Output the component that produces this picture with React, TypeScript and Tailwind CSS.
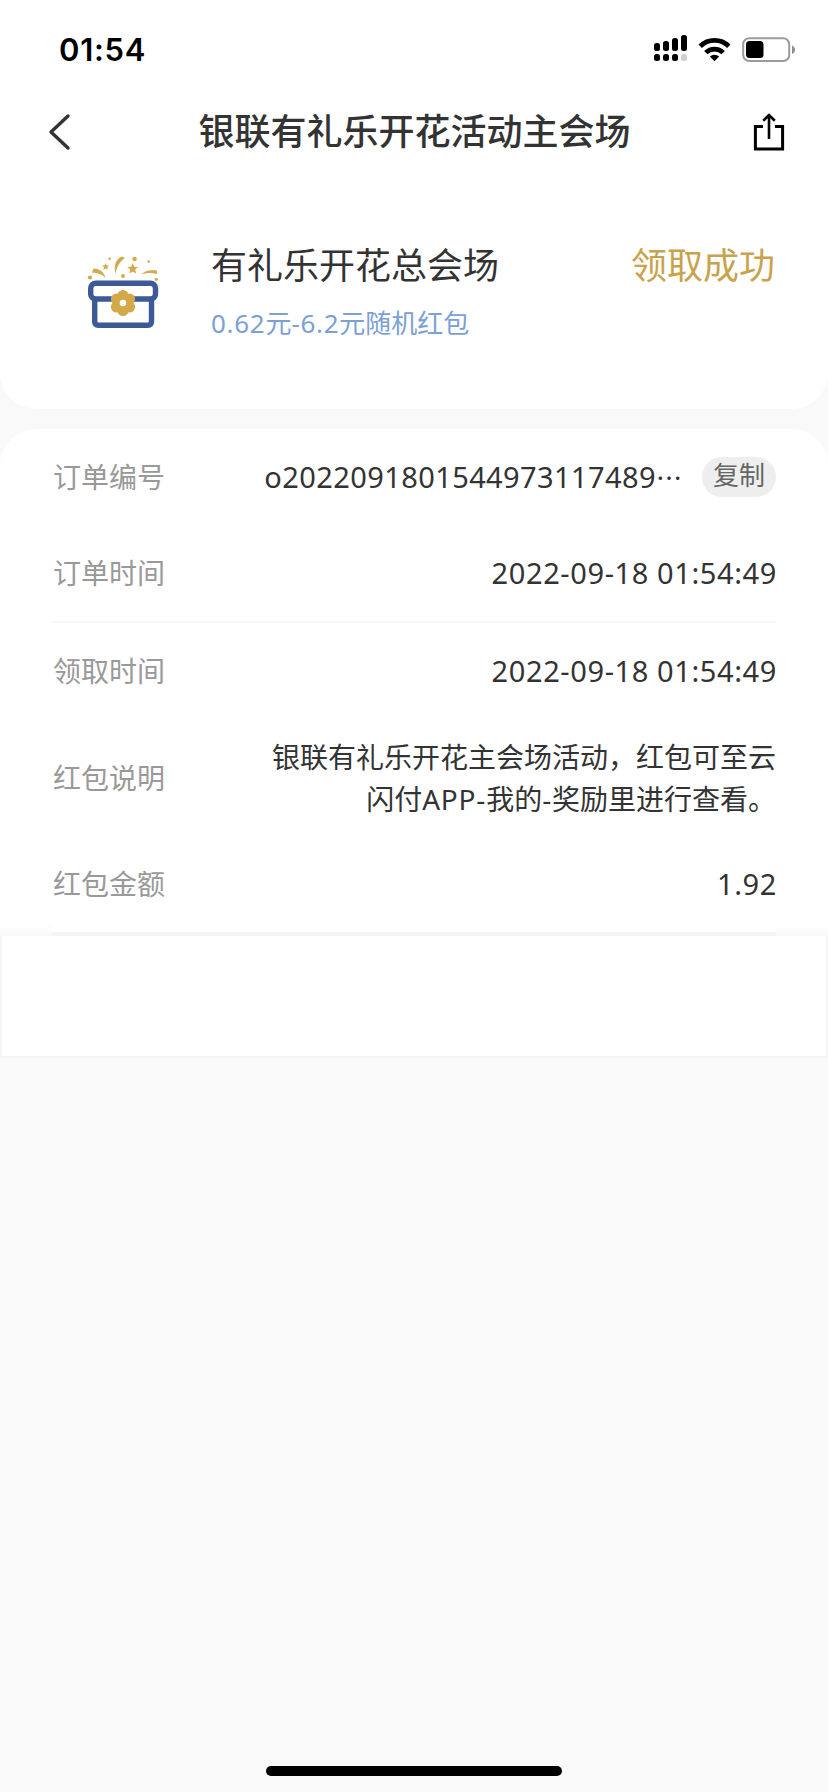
const StatusBar = () => {
  return (
    <div className="flex h-[98px] justify-between pl-[59px] pr-[33px]">
      <div className="mt-[28px] h-[44px] font-['Inter'] text-[31px] leading-[44px] font-semibold tracking-[0.7px] text-black">
        01:54
      </div>
      <svg className="mt-[30px] h-[40px] w-[146px]" viewBox="648 30 146 40">
        <g fill="#000">
          <rect x="653" y="43" width="6" height="8" rx="2.5" />
          <rect x="662" y="41" width="6" height="10" rx="2.5" />
          <rect x="671" y="38" width="6" height="13" rx="2.5" />
          <rect x="680" y="35" width="6" height="16" rx="2.5" />
          <rect x="653" y="54" width="6" height="7" rx="2.5" />
          <rect x="662" y="54" width="6" height="7" rx="2.5" />
          <rect x="671" y="54" width="6" height="7" rx="2.5" />
          <rect x="680" y="54" width="6" height="7" rx="2.5" fill="#d0d0d0" />
        </g>
        <g fill="none" stroke="#000" strokeWidth="4.8">
          <path d="M699.2 46.2a20.5 20.5 0 0 1 28.6 0" />
          <path d="M704.8 52.6a12.4 12.4 0 0 1 17.4 0" />
        </g>
        <path d="M713.5 61.200l-4.600-4.600a6.600 6.600 0 0 1 9.200 0z" fill="#000" />
        <rect x="742.2" y="38.2" width="46" height="22.8" rx="6" fill="none" stroke="#9b9b9b" strokeWidth="2" />
        <rect x="745" y="41" width="17.5" height="17" rx="3.5" fill="#000" />
        <path d="M791 45.500c4 1.600 4 6.800 0 8.400z" fill="#8e8e8e" />
      </svg>
    </div>
  );
};

const NavBar = () => {
  return (
    <div className="flex h-[68px] items-center justify-between pl-[47px] pr-[43px]">
      <svg className="h-[40px] w-[24px]" viewBox="0 0 24 40" fill="none" stroke="#333" strokeWidth="3.4" strokeLinecap="round" strokeLinejoin="round">
        <path d="M21 4L4 20l17 16" />
      </svg>
      <h1 className="ml-[5px] text-[36px] leading-[48px] font-medium">
        银联有礼乐开花活动主会场
      </h1>
      <svg className="h-[40px] w-[32px]" viewBox="0 0 32 40" fill="none" stroke="#000" strokeWidth="3">
        <path d="M10 14.500H2.400v22.500h27.200v-22.500H22" />
        <path d="M16 27V3M10.200 8.700L16 3l5.800 5.700" strokeWidth="2.600" />
      </svg>
    </div>
  );
};

const GiftIcon = () => {
  return (
    <svg className="h-[80px] w-[80px]" viewBox="84 250 80 80">
      <g fill="none" stroke="#3d5a96" strokeWidth="5.400">
        <rect x="90.700" y="283.200" width="64.800" height="15.800" rx="5" />
        <path d="M94.700 299v22.500q0 3.800 3.800 3.800h49.200q3.800 0 3.800-3.800V299" />
      </g>
      <g fill="#d3a94a">
        <circle cx="123" cy="295.500" r="5.600" />
        <circle cx="129.500" cy="299" r="5.600" />
        <circle cx="129.500" cy="307" r="5.600" />
        <circle cx="123" cy="310.500" r="5.600" />
        <circle cx="116.500" cy="307" r="5.600" />
        <circle cx="116.500" cy="299" r="5.600" />
        <circle cx="123" cy="303" r="7" />
        <circle cx="90" cy="277.500" r="2.100" />
        <circle cx="109.600" cy="258.800" r="1.300" />
        <circle cx="123" cy="276" r="1.900" />
        <circle cx="134.600" cy="259" r="2.300" />
        <circle cx="148.700" cy="261.500" r="1.300" />
        <circle cx="156.300" cy="279.300" r="1.600" />
        <path d="M93.500 268.500c6 0 10.500 3.500 12 9.500-3.500-4-7.500-5-13.500-5.500z" />
        <path d="M125 258c-5 3.500-8 8-9.500 16-2-9 .5-15 6.500-17.500z" />
        <path d="M140.500 274.500c4.500-4 10-5 16.500-4v3.400c-6-1.400-11-1.200-16.500.6z" />
        <path d="M132.700 263l1.500 3.700 4 .3-3 2.600 1 3.900-3.500-2.100-3.500 2.100 1-3.900-3-2.600 4-.3z" />
        <path d="M105.600 263l1 2.400 2.600.2-2 1.700.7 2.500-2.300-1.400-2.300 1.400.7-2.500-2-1.700 2.600-.2z" />
      </g>
      <circle cx="123" cy="303" r="3.300" fill="#fff" />
    </svg>
  );
};

const Label = ({ text }: { text: string }) => {
  return <div className="ml-px shrink-0 text-[#999]">{text}</div>;
};

const Row = ({ label, value }: { label: string; value: string }) => {
  return (
    <div className="flex h-[96px] items-center justify-between">
      <Label text={label} />
      <div className="-mr-px text-[29px] tracking-[0.6px]">{value}</div>
    </div>
  );
};

export default function App() {
  return (
    <div className="flex h-[1792px] w-[828px] flex-col bg-[#f9f9f9] font-['Noto_Sans','Noto_Sans_CJK_SC',sans-serif] text-[#333]">
      <div className="h-[409px] rounded-b-[36px] bg-white">
        <StatusBar />
        <NavBar />
        <div className="flex pt-[76px] pl-[84px] pr-[53px]">
          <div className="mt-[8px]">
            <GiftIcon />
          </div>
          <div className="ml-[47px] flex-1">
            <div className="text-[36px] leading-[48px]">有礼乐开花总会场</div>
            <div className="mt-[15px] text-[26px] leading-[36px] text-[#7c9fd6]">
              <span className="tracking-[0.7px]">0.62</span>元<span className="tracking-[0.7px]">-6.2</span>元随机红包
            </div>
          </div>
          <div className="text-[36px] leading-[48px] text-[#c9a24d]">领取成功</div>
        </div>
      </div>

      <div className="mt-[20px] h-[507px] rounded-t-[36px] bg-linear-to-t from-[#f9f9f9] to-white to-[12px] px-[52px] text-[28px] leading-[42px]">
        <div className="flex h-[96px] items-center">
          <Label text="订单编号" />
          <div className="ml-auto flex text-[29px] tracking-[0.4px]">
            o2022091801544973117489
            <span className="w-[28px] font-['Noto_Sans_CJK_SC',sans-serif] text-[26px] tracking-normal">…</span>
          </div>
          <div className="ml-[18px] h-[40px] w-[74px] rounded-full bg-[#eee] text-center text-[26px] leading-[36px] text-[#666]">
            复制
          </div>
        </div>
        <Row label="订单时间" value="2022-09-18 01:54:49" />
        <div className="h-[2px] bg-[#f7f7f7]" />
        <Row label="领取时间" value="2022-09-18 01:54:49" />
        <div className="flex h-[117px] items-center justify-between">
          <Label text="红包说明" />
          <div className="w-[520px] text-right">
            银联有礼乐开花主会场活动，红包可至云
            <br />
            闪付<span className="tracking-[0.8px]">APP-</span>我的<span className="tracking-[0.8px]">-</span>奖励里进行查看。
          </div>
        </div>
        <div className="bg-white">
          <Row label="红包金额" value="1.92" />
        </div>
        <div className="h-[4px] bg-[#f5f5f5]" />
      </div>

      <div className="h-[122px] border-2 border-t-0 border-[#f6f6f6] bg-white" />

      <div className="mx-auto mt-auto mb-[16px] h-[10px] w-[296px] rounded-full bg-black" />
    </div>
  );
}
